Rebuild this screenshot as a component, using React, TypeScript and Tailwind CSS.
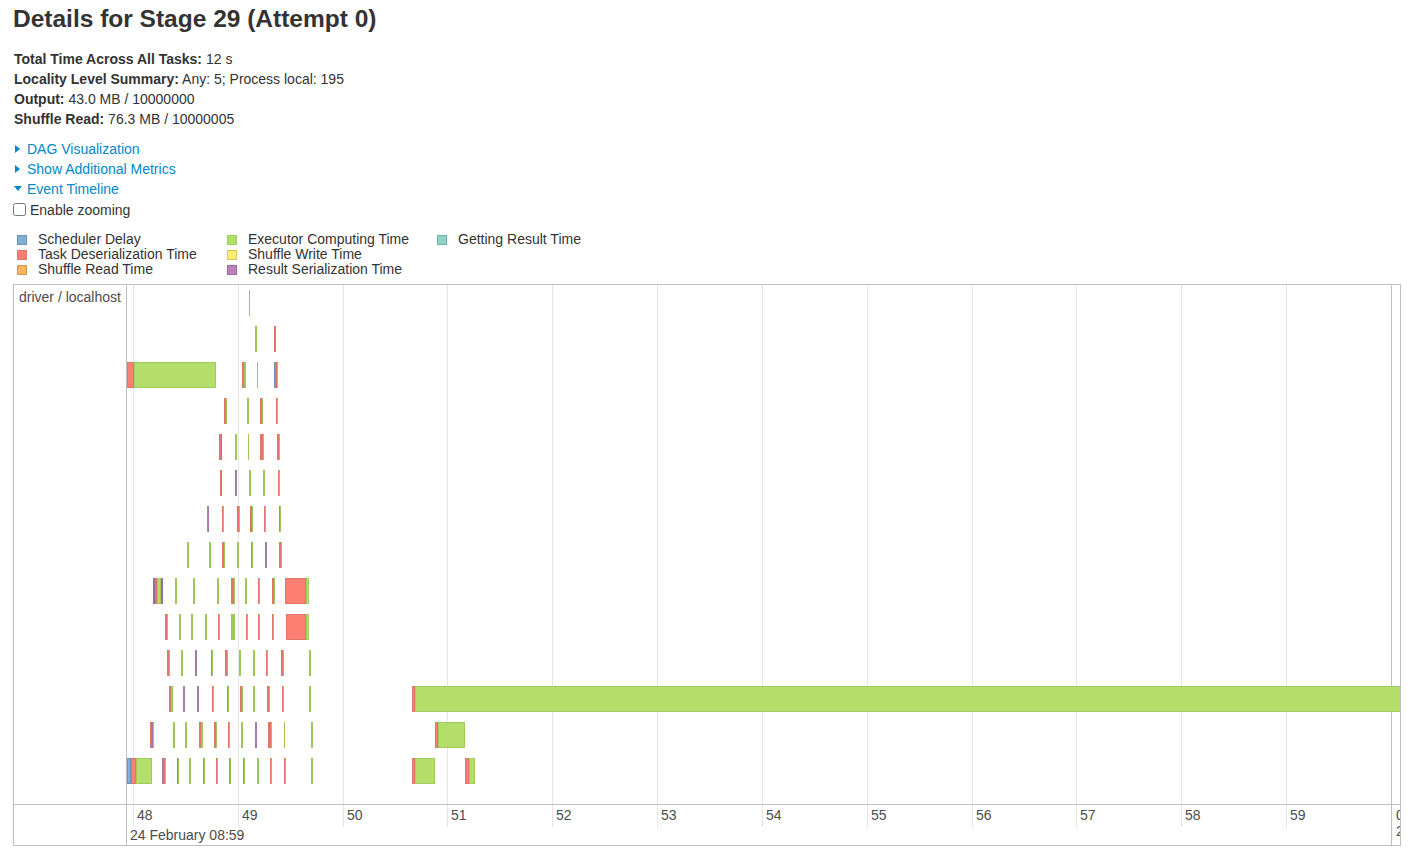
import React, { useState } from "react";

type Seg = [string, number];
type Bar = [number, number, string | Seg[]];

// chart starts at x=127 on the page, bars use page x coords
const X0 = 127;
const TICK = 104.83;

const FILL: Record<string, string> = {
    b: "bg-[#80B1D3]",
    r: "bg-[#FB8072]",
    o: "bg-[#FDB462]",
    g: "bg-[#B3DE69]",
    y: "bg-[#FFED6F]",
    p: "bg-[#BC80BD]",
    t: "bg-[#8DD3C7]",
};

const STROKE: Record<string, string> = {
    b: "bg-[#6B94B0]",
    r: "bg-[#E0776A]",
    o: "bg-[#D39651]",
    g: "bg-[#9CC85A]",
    y: "bg-[#D5C65C]",
    p: "bg-[#A27BA6]",
    t: "bg-[#75B0A6]",
};

const BORDER: Record<string, string> = {
    b: "border-[#6B94B0]",
    r: "border-[#E0776A]",
    o: "border-[#D39651]",
    g: "border-[#A0CE5E]",
    y: "border-[#D5C65C]",
    p: "border-[#9D6B9E]",
    t: "border-[#75B0A6]",
};

const rows: Bar[][] = [
    [[249, 250, "g"]],
    [[255, 257, "g"], [274, 276, "r"]],
    [[127, 216, [["r", 5], ["g", 84]]], [242, 246, "rg"], [257, 258, "g"], [274, 278, "brg"]],
    [[224, 227, "rg"], [247, 249, "g"], [260, 263, "rg"], [276, 278, "rg"]],
    [[219, 222, "rp"], [235, 237, "g"], [248, 249, "g"], [260, 264, "rrg"], [277, 280, "rg"]],
    [[220, 222, "r"], [235, 237, "p"], [249, 251, "g"], [263, 265, "g"], [278, 280, "rg"]],
    [[207, 209, "rp"], [222, 224, "rg"], [237, 240, "rg"], [250, 253, "rg"], [264, 266, "rg"], [279, 281, "rg"]],
    [[187, 189, "g"], [209, 211, "g"], [222, 225, "rg"], [237, 239, "g"], [251, 253, "rg"], [265, 267, "p"], [279, 282, "rg"]],
    [
        [153, 163, [["p", 1], ["r", 1], ["g", 7], ["p", 1]]],
        [175, 177, "g"], [193, 195, "g"], [217, 219, "g"], [231, 235, "rrg"],
        [245, 247, "g"], [258, 260, "rg"], [272, 275, "rg"],
        [285, 309, [["r", 23], ["g", 1]]],
    ],
    [
        [165, 168, "rg"], [179, 181, "g"], [191, 193, "g"], [205, 207, "g"], [218, 220, "rg"],
        [231, 235, "gg"], [246, 248, "rg"], [258, 260, "rg"], [272, 274, "rg"],
        [286, 309, [["r", 22], ["g", 1]]],
    ],
    [
        [167, 170, "rg"], [181, 183, "g"], [195, 197, "p"], [211, 213, "rg"], [225, 228, "rg"],
        [239, 241, "g"], [253, 255, "g"], [266, 268, "rg"], [281, 284, "rg"], [309, 311, "g"],
    ],
    [
        [169, 173, "rg"], [183, 185, "p"], [197, 199, "p"], [212, 214, "rg"], [227, 229, "rg"],
        [240, 243, "rg"], [253, 255, "g"], [267, 270, "rg"], [282, 284, "rg"], [309, 311, "g"],
        [412, 1420, [["r", 1], ["g", 1007]]],
    ],
    [
        [150, 154, "rpg"], [173, 175, "g"], [185, 187, "g"], [199, 203, "rg"], [214, 217, "rg"],
        [228, 230, "rg"], [241, 243, "g"], [255, 257, "p"], [268, 272, "rrg"], [284, 285, "g"],
        [311, 313, "g"],
        [435, 465, [["r", 1], ["g", 29]]],
    ],
    [
        [127, 152, [["b", 2], ["r", 4], ["g", 19]]],
        [162, 166, "prg"], [177, 179, "pg"], [189, 191, "g"], [203, 205, "rg"], [216, 218, "rg"],
        [229, 231, "rg"], [243, 245, "rg"], [257, 259, "g"], [270, 272, "rg"], [284, 286, "rg"],
        [311, 313, "g"],
        [412, 435, [["r", 1], ["g", 22]]],
        [465, 475, [["r", 3], ["g", 7]]],
    ],
];

const legend: [string, string][] = [
    ["b", "Scheduler Delay"],
    ["r", "Task Deserialization Time"],
    ["o", "Shuffle Read Time"],
    ["g", "Executor Computing Time"],
    ["y", "Shuffle Write Time"],
    ["p", "Result Serialization Time"],
    ["t", "Getting Result Time"],
];

const ticks = ["48", "49", "50", "51", "52", "53", "54", "55", "56", "57", "58", "59"];

function TaskBar({ bar, top }: { bar: Bar; top: number }) {
    const [x1, x2, s] = bar;
    const segs: Seg[] = typeof s === "string" ? s.split("").map((c) => [c, 1] as Seg) : s;
    const wide = x2 - x1 > 6;
    return (
        <div
            className="absolute flex h-[26px]"
            style={{ left: x1 - X0, width: x2 - x1, top }}
        >
            {segs.map(([c, w], i) =>
                wide ? (
                    <div
                        key={i}
                        className={`h-full border ${FILL[c]} ${BORDER[c]}`}
                        style={{ flexGrow: w, flexBasis: 0, minWidth: w <= 1 ? 1 : undefined }}
                    />
                ) : (
                    <div key={i} className={`h-full ${STROKE[c]}`} style={{ flexGrow: w, flexBasis: 0 }} />
                )
            )}
        </div>
    );
}

function Arrow({ open }: { open: boolean }) {
    return open ? (
        <span className="inline-block w-0 h-0 border-x-[4px] border-x-transparent border-t-[5px] border-t-[#0088cc] ml-[1px] mr-[5px] mb-[2px]" />
    ) : (
        <span className="inline-block w-0 h-0 border-y-[4px] border-y-transparent border-l-[5px] border-l-[#0088cc] ml-[2px] mr-[7px]" />
    );
}

export default function App() {
    const [zoom, setZoom] = useState(false);

    return (
        <div className="min-h-screen bg-white text-[#333] text-[14px] leading-[20px] font-['Liberation_Sans',Arial,sans-serif] px-[13px]">
            <h3 className="text-[24.5px] font-bold leading-[38px]">Details for Stage 29 (Attempt 0)</h3>

            {/* Summary */}
            <ul className="mt-[11px] ml-[1px]">
                <li>
                    <strong>Total Time Across All Tasks:</strong> 12 s
                </li>
                <li>
                    <strong>Locality Level Summary:</strong> Any: 5; Process local: 195
                </li>
                <li>
                    <strong>Output:</strong> 43.0 MB / 10000000
                </li>
                <li>
                    <strong>Shuffle Read:</strong> 76.3 MB / 10000005
                </li>
            </ul>

            {/* Toggles */}
            <div className="mt-[10px] flex flex-col text-[#0088cc]">
                <a className="flex items-center cursor-pointer">
                    <Arrow open={false} />
                    DAG Visualization
                </a>
                <a className="flex items-center cursor-pointer">
                    <Arrow open={false} />
                    Show Additional Metrics
                </a>
                <a className="flex items-center cursor-pointer">
                    <Arrow open={true} />
                    Event Timeline
                </a>
            </div>
            <label className="flex items-center h-[21px]">
                <input
                    type="checkbox"
                    checked={zoom}
                    onChange={(e) => setZoom(e.target.checked)}
                    className="m-0 w-[13px] h-[13px]"
                />
                <span className="ml-[4px]">Enable zooming</span>
            </label>

            {/* Legend */}
            <div className="mt-[12px] ml-[4px] grid grid-flow-col grid-rows-[15px_15px_15px] grid-cols-[210px_210px_210px] leading-[15px]">
                {legend.map(([c, name]) => (
                    <div key={name} className="flex items-center">
                        <span className={`w-[10px] h-[10px] border ${FILL[c]} ${BORDER[c]}`} />
                        <span className="ml-[11px]">{name}</span>
                    </div>
                ))}
            </div>

            {/* Timeline */}
            <div className="mt-[7px] w-[1388px] border border-[#bfbfbf] text-[#4d4d4d]">
                <div className="flex h-[519px]">
                    <div className="w-[113px] shrink-0 border-r border-[#bfbfbf] pl-[5px] pt-[4px] leading-[16px]">
                        driver / localhost
                    </div>
                    <div className="relative flex-1 overflow-hidden">
                        {ticks.map((t, i) => (
                            <div
                                key={t}
                                className="absolute top-0 bottom-0 w-px bg-[#e5e5e5]"
                                style={{ left: Math.round(6 + i * TICK) }}
                            />
                        ))}
                        <div className="absolute top-0 bottom-0 w-px bg-[#bfbfbf]" style={{ left: 1264 }} />
                        {rows.map((row, ri) =>
                            row.map((bar, bi) => <TaskBar key={`${ri}-${bi}`} bar={bar} top={5 + ri * 36} />)
                        )}
                    </div>
                </div>
                <div className="flex h-[41px] border-t border-[#bfbfbf]">
                    <div className="w-[113px] shrink-0 border-r border-[#bfbfbf]" />
                    <div className="relative flex-1 overflow-hidden leading-[16px]">
                        {ticks.map((t, i) => (
                            <div
                                key={t}
                                className="absolute top-0 h-[22px] border-l border-[#e5e5e5] pl-[3px] pt-[2px]"
                                style={{ left: Math.round(6 + i * TICK) }}
                            >
                                {t}
                            </div>
                        ))}
                        <div className="absolute top-0 bottom-0 border-l border-[#bfbfbf] pl-[4px] pt-[2px] whitespace-nowrap" style={{ left: 1264 }}>
                            00
                            <div>24 February 09:00</div>
                        </div>
                        <div className="absolute left-[3px] top-[22px] whitespace-nowrap">24 February 08:59</div>
                    </div>
                </div>
            </div>
        </div>
    );
}
